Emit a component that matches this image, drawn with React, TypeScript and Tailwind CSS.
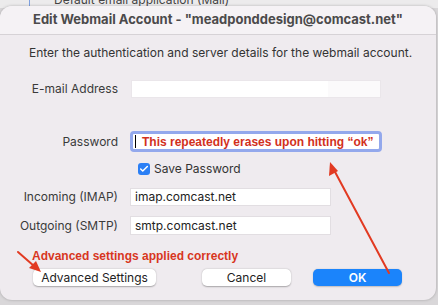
import { Check } from 'lucide-react'

// ─── Field row ────────────────────────────────────────────────────────────────

function Row({ label, children, className }: { label: string; children: React.ReactNode; className?: string }) {
  return (
    <div className={'flex items-center ' + (className ?? '')}>
      <div className="w-[119px] shrink-0 pr-[1px] text-right text-[12px] leading-[16px] text-[#3a3a3a]">{label}</div>
      <div className="pl-[13px]">{children}</div>
    </div>
  )
}

const annot = { fontFamily: '"Liberation Sans", Arial, sans-serif' }

// ─── App ──────────────────────────────────────────────────────────────────────

export default function App() {
  return (
    <div
      className="relative h-[305px] w-[438px] overflow-hidden bg-[#d9d7d9]"
      style={{ fontFamily: 'Inter, "Noto Sans", sans-serif' }}
    >
      {/* window behind the sheet */}
      <div className="absolute left-0 top-0 h-[8px] w-full bg-[#ecebec]">
        <div className="absolute left-[29px] top-0 h-[8px] w-[1px] bg-[#7ea0e0]" />
        <div className="absolute left-[54px] top-[-7px] whitespace-nowrap text-[12px] leading-[14px] text-[#444]">Default email application (Mail)</div>
      </div>

      {/* sheet */}
      <div className="relative mt-[6px] flex h-[294px] w-[436px] flex-col overflow-hidden rounded-[12px] bg-[#efebef] shadow-[0_0_3px_rgba(0,0,0,0.25)]">
        <div className="flex h-[29px] shrink-0 items-center justify-center border-b border-[#d6d2d6] bg-[#f5f2f5] text-[13px] font-bold text-[#4b4a4b]">
          Edit Webmail Account - "meadponddesign@comcast.net"
        </div>

        <div className="pl-[29px] pt-[10px] text-[12px] leading-[16px] text-[#333]">
          Enter the authentication and server details for the webmail account.
        </div>

        <Row label="E-mail Address" className="mt-[20px]">
          <div className="h-[16px] w-[248px] bg-[#fbfafb] shadow-[0_0_0_1px_#eae6ea]">
            <div className="h-full w-[196px] bg-white" />
          </div>
        </Row>

        <Row label="Password" className="mt-[34px]">
          <div className="-ml-[2px] flex h-[21px] w-[252px] items-center overflow-hidden whitespace-nowrap rounded-[4px] border-[3px] border-[#93a8ec] bg-white pl-[2px]">
            <div className="mr-[6px] h-[13px] w-[1px] shrink-0 bg-black" />
            <span className="text-[12px] font-bold leading-[14px] text-[#d2301c]" style={annot}>This repeatedly erases upon hitting “ok”</span>
          </div>
        </Row>

        <div className="mt-[10px] flex items-center pl-[138px]">
          <div className="flex h-[12px] w-[12px] items-center justify-center rounded-[3px] bg-[#2b7ff5]">
            <Check size={10} strokeWidth={3.5} className="text-white" />
          </div>
          <span className="pl-[4px] text-[12px] leading-[14px] text-[#333]">Save Password</span>
        </div>

        <Row label="Incoming (IMAP)" className="mt-[13px]">
          <div className="-ml-[1px] flex h-[16px] w-[199px] items-center bg-white pl-[4px] text-[12px] text-[#222] shadow-[0_0_0_1px_#e2dee2]">
            imap.comcast.net
          </div>
        </Row>

        <Row label="Outgoing (SMTP)" className="mt-[12px]">
          <div className="-ml-[1px] flex h-[17px] w-[199px] items-center bg-white pl-[4px] text-[12px] text-[#222] shadow-[0_0_0_1px_#e2dee2]">
            smtp.comcast.net
          </div>
        </Row>

        <div className="mt-[15px] whitespace-nowrap pl-[32px] text-[12px] font-bold leading-[14px] text-[#d8361e]" style={annot}>
          Advanced settings applied correctly
        </div>

        <div className="mt-[6px] flex items-center pl-[33px]">
          <div className="flex h-[17px] w-[123px] items-center justify-center rounded-[5px] bg-white text-[12px] text-[#222] shadow-[0_0.5px_1.5px_rgba(0,0,0,0.3)]">
            Advanced Settings
          </div>
          <div className="ml-[46px] flex h-[17px] w-[89px] items-center justify-center rounded-[5px] bg-white text-[12px] text-[#222] shadow-[0_0.5px_1.5px_rgba(0,0,0,0.3)]">
            Cancel
          </div>
          <div className="ml-[22px] flex h-[17px] w-[89px] items-center justify-center rounded-[5px] bg-[#1b84fb] text-[12px] font-semibold text-white shadow-[0_0.5px_1.5px_rgba(0,0,0,0.2)]">
            OK
          </div>
        </div>
      </div>

      {/* annotation arrows */}
      <svg className="pointer-events-none absolute left-0 top-0" width="438" height="305" viewBox="0 0 438 305">
        <line x1="18" y1="252" x2="34" y2="266" stroke="#e23a22" strokeWidth="2" strokeLinecap="round" />
        <polygon points="41,272 29,268 36,261" fill="#e23a22" />
        <line x1="389" y1="273" x2="334" y2="170" stroke="#e23a22" strokeWidth="2" strokeLinecap="round" />
        <polygon points="330,162 329,176 338,171" fill="#e23a22" />
      </svg>
    </div>
  )
}
